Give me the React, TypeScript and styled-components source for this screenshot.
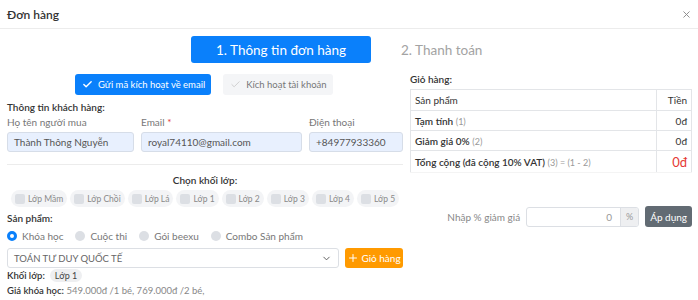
import styled, { createGlobalStyle } from 'styled-components'
import { Check, ChevronDown, Plus, X } from 'lucide-react'

const Global = createGlobalStyle`
  body {
    margin: 0;
    background: #fff;
    font-family: Lato, "Noto Sans", sans-serif;
    color: #333;
  }
  * { box-sizing: border-box; }
`

const Modal = styled.div`
  width: 698px;
  height: 300px;
  overflow: hidden;
`
const Header = styled.div`
  height: 29px;
  display: flex;
  align-items: center;
  justify-content: space-between;
  padding: 0 6px 0 7px;
  border-bottom: 1px solid #ececec;
`
const Title = styled.div`
  font-size: 12px;
  font-weight: 600;
  color: #333;
`
const Close = styled.div`
  color: #888;
  display: flex;
`
const Body = styled.div`
  padding: 7px 6px 0 7px;
`
const Steps = styled.div`
  display: flex;
  align-items: center;
  padding-left: 184px;
  gap: 30px;
  height: 27px;
`
const Step = styled.div<{ $active?: boolean }>`
  height: 27px;
  display: flex;
  align-items: center;
  justify-content: center;
  font-size: 13.5px;
  border-radius: 3px;
  width: ${p => (p.$active ? '180px' : 'auto')};
  background: ${p => (p.$active ? '#0a80fb' : 'transparent')};
  color: ${p => (p.$active ? '#fff' : '#a3a3a3')};
`
const Columns = styled.div`
  display: grid;
  grid-template-columns: 396px 282px;
  gap: 7px;
  margin-top: 9px;
`
const Left = styled.div`
  display: flex;
  flex-direction: column;
`
const ButtonRow = styled.div`
  display: flex;
  gap: 12px;
  padding-left: 68px;
  margin-top: 2px;
`
const ActionButton = styled.div<{ $primary?: boolean }>`
  height: 21px;
  display: flex;
  align-items: center;
  gap: 5px;
  padding: 0 6px 0 7px;
  border-radius: 3px;
  font-size: 9.5px;
  background: ${p => (p.$primary ? '#0a80fb' : '#f4f5f7')};
  color: ${p => (p.$primary ? '#fff' : '#777')};
`
const SectionTitle = styled.div<{ $center?: boolean }>`
  font-size: 10px;
  font-weight: 600;
  color: #333;
  height: 13px;
  line-height: 13px;
  text-align: ${p => (p.$center ? 'center' : 'left')};
`
const Fields = styled.div`
  display: grid;
  grid-template-columns: 127px 161px 94px;
  gap: 7px;
  margin-top: 2px;
`
const Field = styled.div`
  display: flex;
  flex-direction: column;
  gap: 3px;
`
const Label = styled.div`
  font-size: 10px;
  color: #777;
  height: 13px;
  line-height: 13px;
  span { color: #e53935; }
`
const Input = styled.div`
  height: 20px;
  border: 1px solid #d6dde8;
  border-radius: 3px;
  background: #e8f0fe;
  font-size: 10px;
  color: #555;
  display: flex;
  align-items: center;
  padding-left: 6px;
  white-space: nowrap;
  overflow: hidden;
`
const Divider = styled.div`
  height: 1px;
  background: #ececec;
  margin: 12px 0 9px;
`
const Chips = styled.div`
  display: flex;
  gap: 3px;
  padding-left: 4px;
  margin-top: 3px;
`
const Chip = styled.div`
  height: 17px;
  display: flex;
  align-items: center;
  gap: 3px;
  padding: 0 4px 0 4px;
  border-radius: 9px;
  background: #f3f4f6;
  font-size: 8.5px;
  color: #8a8a8a;
  white-space: nowrap;
`
const Box = styled.span`
  width: 10px;
  height: 10px;
  border-radius: 2px;
  background: #dcdfe4;
`
const Radios = styled.div`
  display: flex;
  gap: 12px;
  margin-top: 4px;
  height: 14px;
  align-items: center;
`
const Radio = styled.div<{ $checked?: boolean }>`
  display: flex;
  align-items: center;
  gap: 5px;
  font-size: 10px;
  color: #777;
  &::before {
    content: '';
    width: ${p => (p.$checked ? '4px' : '10px')};
    height: ${p => (p.$checked ? '4px' : '10px')};
    border-radius: 50%;
    background: ${p => (p.$checked ? '#fff' : '#dcdfe4')};
    border: ${p => (p.$checked ? '3px solid #0a80fb' : 'none')};
  }
`
const SelectRow = styled.div`
  display: flex;
  gap: 6px;
  margin-top: 5px;
`
const Select = styled.div`
  flex: 1;
  height: 20px;
  border: 1px solid #dcdfe4;
  border-radius: 3px;
  display: flex;
  align-items: center;
  justify-content: space-between;
  padding: 0 6px;
  font-size: 9.5px;
  color: #666;
`
const CartButton = styled.div`
  width: 58px;
  height: 20px;
  background: #ff9a00;
  color: #fff;
  border-radius: 3px;
  font-size: 10px;
  display: flex;
  align-items: center;
  justify-content: center;
  gap: 2px;
`
const InfoLine = styled.div`
  display: flex;
  align-items: center;
  gap: 5px;
  font-size: 9.5px;
  color: #888;
  height: 15px;
  b { color: #333; font-weight: 600; }
`
const Tag = styled.span`
  background: #eeeff1;
  border-radius: 7px;
  padding: 1px 5px;
  font-size: 9px;
  color: #444;
`
const Right = styled.div`
  display: flex;
  flex-direction: column;
  padding-top: 1px;
`
const Table = styled.table`
  border-collapse: collapse;
  width: 100%;
  margin-top: 3px;
  font-size: 10px;
  td {
    border: 1px solid #e3e5e8;
    padding: 0 4px;
    height: 20px;
  }
  td:last-child { text-align: right; width: 35px; }
  tr:first-child td { height: 21px; }
  tr:last-child td { height: 22px; border-bottom-color: #f4f4f4; }
`
const Note = styled.span`
  color: #999;
  font-size: 9px;
  font-weight: 400;
`
const Strong = styled.span`
  font-weight: 600;
`
const Total = styled.span`
  color: #e53935;
  font-size: 13px;
`
const DiscountRow = styled.div`
  display: flex;
  align-items: center;
  justify-content: flex-end;
  margin-top: 33px;
  font-size: 10px;
  color: #888;
`
const DiscountInput = styled.div`
  display: flex;
  margin-left: 6px;
  height: 20px;
  border: 1px solid #dcdfe4;
  border-radius: 3px;
  overflow: hidden;
`
const DiscountValue = styled.div`
  width: 93px;
  display: flex;
  align-items: center;
  justify-content: flex-end;
  padding-right: 8px;
  color: #999;
`
const Addon = styled.div`
  width: 18px;
  background: #eeeff1;
  border-left: 1px solid #dcdfe4;
  display: flex;
  align-items: center;
  justify-content: center;
  color: #999;
  font-size: 9px;
`
const ApplyButton = styled.div`
  margin-left: 6px;
  height: 21px;
  padding: 0 5px;
  background: #626b73;
  color: #fff;
  border-radius: 3px;
  display: flex;
  align-items: center;
  font-size: 10px;
`

const grades = ['Lớp Mầm', 'Lớp Chồi', 'Lớp Lá', 'Lớp 1', 'Lớp 2', 'Lớp 3', 'Lớp 4', 'Lớp 5']
const products = ['Khóa học', 'Cuộc thi', 'Gói beexu', 'Combo Sản phẩm']

export default function App() {
  return (
    <Modal>
      <Global />
      <Header>
        <Title>Đơn hàng</Title>
        <Close><X size={11} strokeWidth={2} /></Close>
      </Header>
      <Body>
        <Steps>
          <Step $active>1. Thông tin đơn hàng</Step>
          <Step>2. Thanh toán</Step>
        </Steps>
        <Columns>
          <Left>
            <ButtonRow>
              <ActionButton $primary><Check size={11} strokeWidth={3} />Gửi mã kích hoạt về email</ActionButton>
              <ActionButton><Check size={11} strokeWidth={2} color="#ccc" />Kích hoạt tài khoản</ActionButton>
            </ButtonRow>
            <SectionTitle style={{ marginTop: 6 }}>Thông tin khách hàng:</SectionTitle>
            <Fields>
              <Field>
                <Label>Họ tên người mua</Label>
                <Input>Thành Thông Nguyễn</Input>
              </Field>
              <Field>
                <Label>Email <span>*</span></Label>
                <Input>royal74110@gmail.com</Input>
              </Field>
              <Field>
                <Label>Điện thoại</Label>
                <Input>+84977933360</Input>
              </Field>
            </Fields>
            <Divider />
            <SectionTitle $center>Chọn khối lớp:</SectionTitle>
            <Chips>
              {grades.map(g => (
                <Chip key={g}><Box />{g}</Chip>
              ))}
            </Chips>
            <SectionTitle style={{ marginTop: 5 }}>Sản phẩm:</SectionTitle>
            <Radios>
              {products.map((p, i) => (
                <Radio key={p} $checked={i === 0}>{p}</Radio>
              ))}
            </Radios>
            <SelectRow>
              <Select>TOÁN TƯ DUY QUỐC TẾ<ChevronDown size={11} color="#555" /></Select>
              <CartButton><Plus size={12} strokeWidth={2} />Giỏ hàng</CartButton>
            </SelectRow>
            <InfoLine><b>Khối lớp:</b><Tag>Lớp 1</Tag></InfoLine>
            <InfoLine><span><b>Giá khóa học:</b> 549.000đ /1 bé, 769.000đ /2 bé,</span></InfoLine>
          </Left>
          <Right>
            <SectionTitle>Giỏ hàng:</SectionTitle>
            <Table>
              <tbody>
                <tr><td>Sản phẩm</td><td>Tiền</td></tr>
                <tr><td><Strong>Tạm tính</Strong> <Note>(1)</Note></td><td>0đ</td></tr>
                <tr><td><Strong>Giảm giá 0%</Strong> <Note>(2)</Note></td><td>0đ</td></tr>
                <tr><td><Strong>Tổng cộng (đã cộng 10% VAT)</Strong> <Note>(3) = (1 - 2)</Note></td><td><Total>0đ</Total></td></tr>
              </tbody>
            </Table>
            <DiscountRow>
              Nhập % giảm giá
              <DiscountInput>
                <DiscountValue>0</DiscountValue>
                <Addon>%</Addon>
              </DiscountInput>
              <ApplyButton>Áp dụng</ApplyButton>
            </DiscountRow>
          </Right>
        </Columns>
      </Body>
    </Modal>
  )
}
